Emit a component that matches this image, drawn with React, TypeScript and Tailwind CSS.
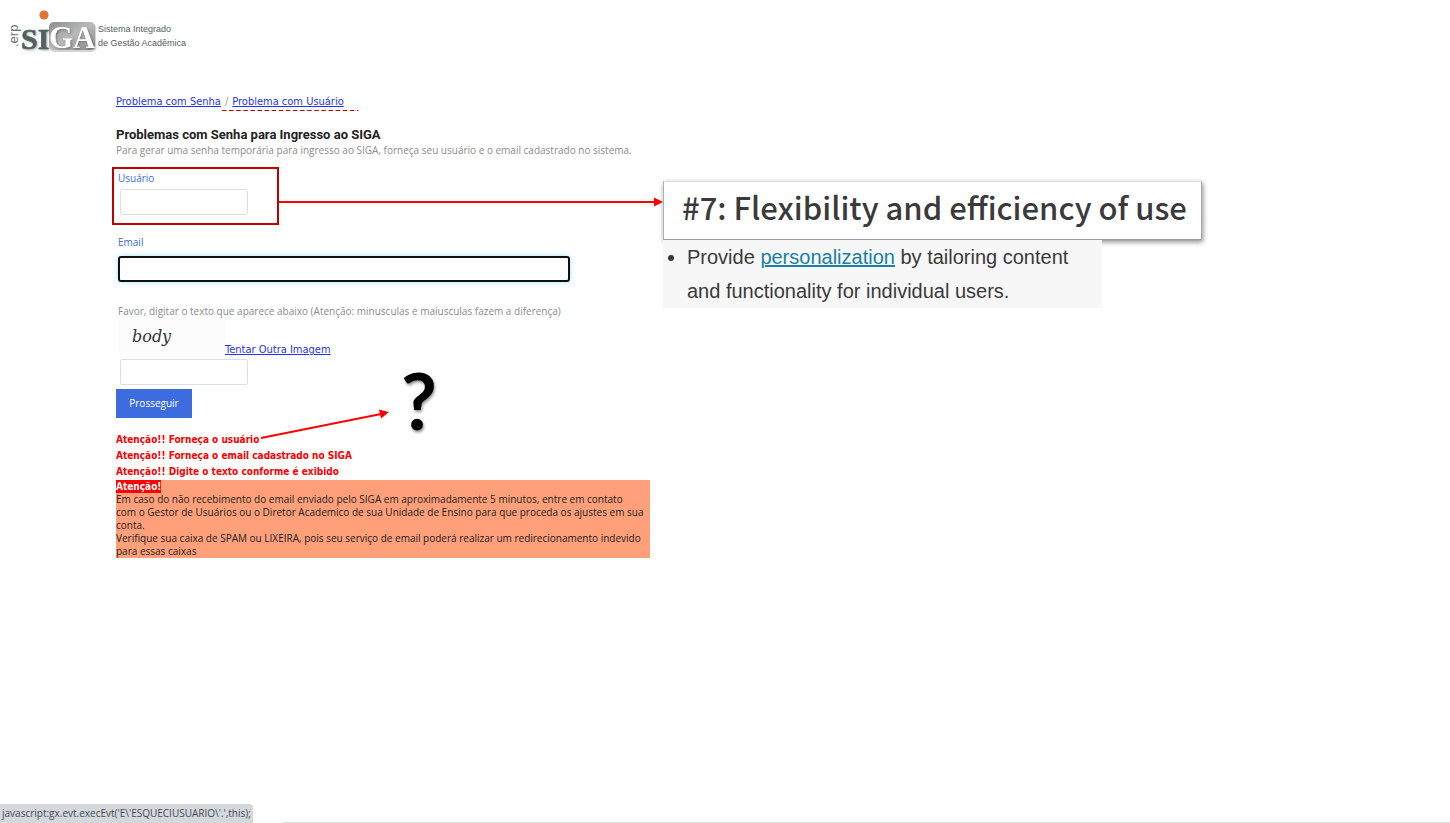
import React from "react";

const tahoma = "font-['DejaVu_Sans_Condensed','DejaVu_Sans',sans-serif]";

function Logo() {
  return (
    <svg width="98" height="48" viewBox="0 0 98 48" role="img" aria-label="SIGA">
      <defs>
        <linearGradient id="plate" x1="0" y1="0" x2="1" y2="1">
          <stop offset="0" stopColor="#8d8f8f" />
          <stop offset="0.5" stopColor="#b9baba" />
          <stop offset="1" stopColor="#858787" />
        </linearGradient>
      </defs>
      <rect x="50" y="15" width="46" height="29" rx="5" fill="#d4d4d4" />
      <rect x="49" y="14" width="46" height="28" rx="5" fill="url(#plate)" />
      <g
        fontFamily="'Liberation Serif', serif"
        fontWeight="700"
        className="[filter:drop-shadow(1px_1px_1px_#00000050)]"
      >
        <text x="21" y="41" fontSize="30" fill="#4f625d" stroke="#4f625d" strokeWidth="0.6">
          SI
        </text>
        <text x="49" y="40" fontSize="31" fill="#ffffff">
          GA
        </text>
      </g>
      <circle cx="44" cy="7" r="4.6" fill="#e5732c" />
      <text
        transform="translate(18 39) rotate(-90)"
        fontFamily="'Liberation Sans', sans-serif"
        fontSize="13"
        fill="#6a7471"
      >
        .erp
      </text>
    </svg>
  );
}

const field =
  "h-[26px] rounded-[2px] border border-[#dcdfdf] bg-white px-2 text-[11px] text-gray-800 outline-none";
const link = "text-[11px] leading-4 text-[#1f33f0] underline";

export default function App() {
  return (
    <div className="flex min-h-screen flex-col overflow-x-hidden bg-white font-['Open_Sans','Noto_Sans',sans-serif] text-[10px]">
      <header className="flex h-[60px] items-start pt-2">
        <Logo />
        <p className="pt-[14px] font-['Liberation_Sans',sans-serif] text-[9px] leading-[14px] text-[#55625e]">
          Sistema Integrado
          <br />
          de Gestão Acadêmica
        </p>
      </header>

      <main className="flex items-start gap-[13px] pt-[34px] pl-[116px]">
        <div className="w-[534px] shrink-0">
          <nav className={`flex gap-1 ${tahoma}`}>
            <a href="#senha" className={link}>
              Problema com Senha
            </a>
            <span className="text-[11px] leading-4 text-[#999]">/</span>
            <a href="#usuario" className={`${link} relative`}>
              Problema com Usuário
              <svg className="absolute top-[15px] -left-2.5" width="136" height="3" aria-hidden="true">
                <path d="M0 1.5H136" stroke="#c00000" strokeWidth="1" strokeDasharray="4.5 2.6" />
              </svg>
            </a>
          </nav>

          <h1 className="mt-[17px] font-['Roboto',sans-serif] text-[13px] leading-4 font-bold text-[#222]">
            Problemas com Senha para Ingresso ao SIGA
          </h1>
          <p className="leading-[14px] text-[#8c8c8c]">
            Para gerar uma senha temporária para ingresso ao SIGA, forneça seu usuário e o email cadastrado no sistema.
          </p>

          <form onSubmit={(e) => e.preventDefault()}>
            <div className="relative mt-[10px] -ml-1 w-[167px] border-2 border-[#c00000] pb-2 pl-1">
              <label htmlFor="user" className="block leading-[18px] text-[#3d6cdf]">
                Usuário
              </label>
              <input id="user" type="text" className={`${field} mt-0.5 ml-0.5 block w-32`} />
              <svg className="absolute top-7 left-full z-10" width="386" height="10" aria-hidden="true">
                <path d="M2 5H378" stroke="#ff0000" strokeWidth="2" />
                <path d="M377 0.5L386 5L377 9.5Z" fill="#ff0000" />
              </svg>
            </div>

            <div className="mt-2 pl-0.5">
              <label htmlFor="email" className="block leading-[18px] text-[#3d6cdf]">
                Email
              </label>
              <input
                id="email"
                type="email"
                className="mt-[5px] block h-[26px] w-[452px] rounded-[3px] border-2 border-[#101010] bg-white px-2 text-[11px] shadow-[0_0_5px_#a5e3f5] outline-none"
              />
            </div>

            <div className="mt-5 pl-0.5">
              <label htmlFor="captcha" className="block leading-[18px] text-[#8c8c8c]">
                Favor, digitar o texto que aparece abaixo (Atenção: minusculas e maiusculas fazem a diferença)
              </label>
              <div className="flex h-[38px] items-start">
                <div className="h-[34px] w-[107px] bg-[#fcfcfc] pl-[14px] font-['DejaVu_Serif',serif] text-[16px] leading-[34px] text-[#333] italic">
                  body
                </div>
                <a href="#outra" className={`${link} ${tahoma} self-end`}>
                  Tentar Outra Imagem
                </a>
              </div>
              <input id="captcha" type="text" className={`${field} mt-px ml-0.5 block w-32`} />
            </div>

            <button
              type="submit"
              className="mt-1 block h-[29px] w-[76px] bg-[#3d6cdf] text-[10px] font-medium text-white"
            >
              Prosseguir
            </button>
          </form>

          <div className={`relative mt-[14px] leading-4 font-bold text-[#ff0000] ${tahoma}`}>
            <p>Atenção!! Forneça o usuário</p>
            <p>Atenção!! Forneça o email cadastrado no SIGA</p>
            <p>Atenção!! Digite o texto conforme é exibido</p>
            <svg className="absolute -top-6 left-36" width="130" height="32" aria-hidden="true">
              <path d="M1 30L121 6" stroke="#ff0000" strokeWidth="2" />
              <path d="M119 1.5L129 4L121 10.5Z" fill="#ff0000" />
            </svg>
            <span className="absolute -top-[72px] left-[285px] font-['Lato',sans-serif] text-[78px] leading-[80px] font-bold text-black [text-shadow:1px_2px_3px_#00000070]">
              ?
            </span>
          </div>

          <section className="bg-[#ffa07a] leading-[13px] text-[#1c1c1c]">
            <strong className={`inline-block bg-[#ff0000] align-top text-white ${tahoma}`}>Atenção!</strong>
            <p>
              Em caso do não recebimento do email enviado pelo SIGA em aproximadamente 5 minutos, entre em contato
              <br />
              com o Gestor de Usuários ou o Diretor Academico de sua Unidade de Ensino para que proceda os ajustes em sua
              conta.
            </p>
            <p>
              Verifique sua caixa de SPAM ou LIXEIRA, pois seu serviço de email poderá realizar um redirecionamento
              indevido para essas caixas
            </p>
          </section>
        </div>

        <aside className="pt-[87px] text-[#3a3a3a]">
          <h2 className="w-[539px] border border-t-[#dddddd] border-r-[#a8a8a8] border-b-[#999999] border-l-[#b0b0b0] bg-white pb-2 pl-[18px] font-['Noto_Sans_CJK_SC',sans-serif] text-[31px] leading-[49px] font-medium whitespace-nowrap shadow-[1px_2px_5px_#00000075]">
            #7: Flexibility and efficiency of use
          </h2>
          <ul className="relative w-[439px] list-disc bg-[#f7f7f7] pl-6 font-['Liberation_Sans',sans-serif] text-[20px] leading-[34px]">
            <li>
              Provide{" "}
              <a href="#personalization" className="text-[#1a7fa5] underline">
                personalization
              </a>{" "}
              by tailoring content
              <br />
              and functionality for individual users.
            </li>
          </ul>
        </aside>
      </main>

      <footer className="mt-auto flex items-end gap-[30px]">
        <p className="h-[19px] rounded-tr-sm bg-[#d3d8dc] pr-0.5 pl-0.5 leading-[19px] text-[#444a50]">
          {"javascript:gx.evt.execEvt('E\\'ESQUECIUSUARIO\\'.',this);"}
        </p>
        <div className="h-px grow bg-[#e0e0e0]" />
      </footer>
    </div>
  );
}
